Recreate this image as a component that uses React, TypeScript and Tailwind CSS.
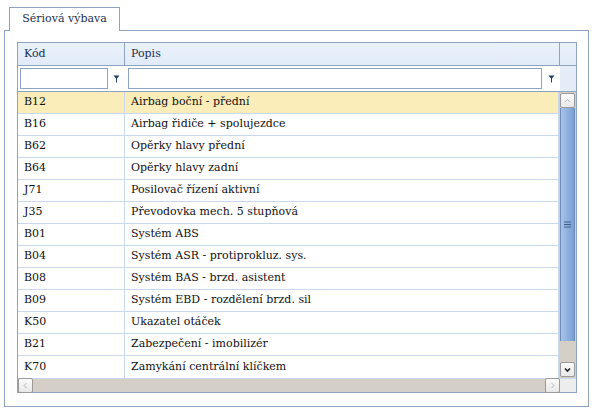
import React from 'react';

const rows: [string, string][] = [
    ['B12', 'Airbag boční - přední'],
    ['B16', 'Airbag řidiče + spolujezdce'],
    ['B62', 'Opěrky hlavy přední'],
    ['B64', 'Opěrky hlavy zadní'],
    ['J71', 'Posilovač řízení aktivní'],
    ['J35', 'Převodovka mech. 5 stupňová'],
    ['B01', 'Systém ABS'],
    ['B04', 'Systém ASR - protiprokluz. sys.'],
    ['B08', 'Systém BAS - brzd. asistent'],
    ['B09', 'Systém EBD - rozdělení brzd. sil'],
    ['K50', 'Ukazatel otáček'],
    ['B21', 'Zabezpečení - imobilizér'],
    ['K70', 'Zamykání centrální klíčkem'],
];

function FilterIcon() {
    return (
        <svg width="7" height="8" viewBox="0 0 7 8">
            <path d="M0.5 0.5h6L4 3.5V7.5H3V3.5Z" fill="#1f3f66" />
        </svg>
    );
}

function ScrollButton({ dir }: { dir: 'up' | 'down' | 'left' | 'right' }) {
    const paths = {
        up: 'M2 6L4.5 3.5L7 6',
        down: 'M2 3.5L4.5 6L7 3.5',
        left: 'M5.5 2L3 4.5L5.5 7',
        right: 'M3.5 2L6 4.5L3.5 7',
    };
    const dark = dir === 'down';
    return (
        <div className="w-[15px] h-[15px] shrink-0 rounded-[2px] border border-[#9a9a9a] bg-gradient-to-b from-[#fbfbfb] to-[#e8e8e8] flex items-center justify-center">
            <svg width="9" height="9" viewBox="0 0 9 9">
                <path d={paths[dir]} fill="none" stroke={dark ? '#222' : '#b5b5b5'} strokeWidth={dark ? 1.6 : 1} />
            </svg>
        </div>
    );
}

export default function App() {
    return (
        <div className="w-[596px] h-[414px] bg-white relative font-['DejaVu_Serif',serif]">
            <div className="absolute left-[9px] top-[7px] w-[111px] h-[24px] border border-b-0 border-[#8ea3c0] bg-white z-10 flex items-center justify-center text-[11px] text-[#1b2f4f]">
                Sériová výbava
            </div>
            <div className="absolute left-[4px] top-[30px] w-[585px] h-[377px] border border-[#8ea3c0] pt-[11px] pl-[12px]">
                <div className="w-[560px] h-[351px] border border-[#8ea3c0] flex flex-col text-[11px] text-[#111]">
                    <div className="flex h-[23px] border-b border-[#8ea3c0] bg-gradient-to-b from-[#eaf1fb] to-[#e1ebf8]">
                        <div className="w-[107px] border-r border-[#8ea3c0] pl-[6px] flex items-center text-[#1b2f4f]">Kód</div>
                        <div className="w-[435px] border-r border-[#8ea3c0] pl-[6px] flex items-center text-[#1b2f4f]">Popis</div>
                        <div className="flex-1" />
                    </div>
                    <div className="flex h-[26px] border-b border-[#8ea3c0]">
                        <div className="w-[107px] flex items-center pl-[2px] gap-[5px]">
                            <div className="w-[88px] h-[21px] border border-[#8ea3c0] bg-white" />
                            <FilterIcon />
                        </div>
                        <div className="w-[435px] flex items-center pl-[3px] gap-[6px]">
                            <div className="w-[414px] h-[21px] border border-[#8ea3c0] bg-white" />
                            <FilterIcon />
                        </div>
                        <div className="flex-1 bg-[#e4ecf7]" />
                    </div>
                    <div className="flex h-[286px]">
                        <div className="w-[542px] flex flex-col">
                            {rows.map(([code, desc], i) => (
                                <div
                                    key={code}
                                    className={`flex h-[22px] border-b border-[#c9d8ec] last:border-b-0 ${i === 0 ? 'bg-[#faedb9]' : 'bg-white'}`}
                                >
                                    <div className="w-[107px] border-r border-[#c9d8ec] pl-[6px] flex items-center">{code}</div>
                                    <div className="flex-1 pl-[6px] flex items-center">{desc}</div>
                                </div>
                            ))}
                        </div>
                        <div className="flex-1 bg-[#d4d0c8] flex flex-col items-center py-[1px] px-[1px] border-l border-[#c9d8ec]">
                            <ScrollButton dir="up" />
                            <div className="w-[15px] h-[233px] bg-gradient-to-r from-[#a9c3e8] via-[#8fb1e0] to-[#7c9fd3] border-x border-[#6d8cbc] flex items-center justify-center">
                                <svg width="7" height="7" viewBox="0 0 7 7">
                                    <path d="M0 1h7M0 3.5h7M0 6h7" stroke="#3d5f8f" strokeWidth="1" />
                                </svg>
                            </div>
                            <div className="flex-1" />
                            <ScrollButton dir="down" />
                        </div>
                    </div>
                    <div className="flex h-[14px] border-t border-[#c9d8ec]">
                        <div className="w-[542px] bg-[#d4d0c8] flex items-center justify-between">
                            <ScrollButton dir="left" />
                            <ScrollButton dir="right" />
                        </div>
                        <div className="flex-1 bg-[#ededed]" />
                    </div>
                </div>
            </div>
        </div>
    );
}
